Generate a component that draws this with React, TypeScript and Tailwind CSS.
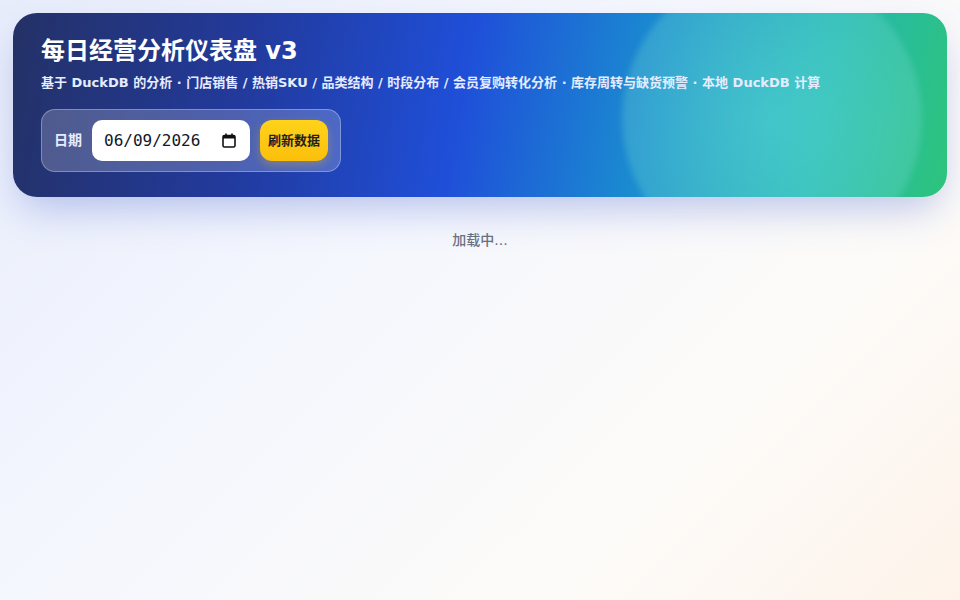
import React from "react";

export default function App() {
  return (
    <div
      className="min-h-[600px] w-full bg-[linear-gradient(135deg,#e8edfb_0%,#f5f7fe_40%,#fdfbf8_75%,#fdf3ea_100%)] px-[13px] pt-[13px]"
      style={{ fontFamily: '"DejaVu Sans", "Noto Sans CJK SC", sans-serif' }}
    >
      <header className="relative overflow-hidden rounded-[24px] bg-[linear-gradient(100deg,#243166_0%,#223a9c_25%,#1f4fd9_48%,#1a8ed0_68%,#23b6b4_85%,#2ec47c_100%)] px-[28px] pt-[24px] pb-[25px] text-white shadow-[0_18px_40px_-8px_rgba(60,90,200,0.35)]">
        <div className="pointer-events-none absolute left-[609px] top-[-45px] h-[300px] w-[300px] rounded-full bg-[radial-gradient(circle_at_50%_50%,rgba(110,230,220,0.45),rgba(120,220,210,0.28)_70%,rgba(255,255,255,0.12)_100%)] blur-[3px]" />
        <div className="relative">
          <h1 className="text-[24px] font-bold leading-[28px]">每日经营分析仪表盘 v3</h1>
          <p className="mt-[10px] text-[13px] font-bold leading-[16px] text-[#e6ecff]">
            基于 DuckDB 的分析 · 门店销售 / 热销SKU / 品类结构 / 时段分布 / 会员复购转化分析 · 库存周转与缺货预警 · 本地 DuckDB 计算
          </p>
          <div className="mt-[18px] inline-flex items-center gap-[10px] rounded-[14px] border border-white/30 bg-white/20 py-[10px] pl-[12px] pr-[12px]">
            <span className="text-[14px] font-bold text-[#e6ecff]">日期</span>
            <div className="flex h-[41px] w-[158px] items-center justify-between rounded-[10px] bg-white pl-[12px] pr-[14px] text-[#111827]">
              <span
                className="text-[16px] font-medium"
                style={{ fontFamily: '"DejaVu Sans Mono", monospace' }}
              >
                06/09/2026
              </span>
              <svg width="14" height="15" viewBox="0 0 14 15" fill="none">
                <rect x="1" y="2.5" width="12" height="11.5" rx="1.5" stroke="#111" strokeWidth="1.6" />
                <rect x="1" y="2.5" width="12" height="3" fill="#111" />
                <line x1="4" y1="0.5" x2="4" y2="3" stroke="#111" strokeWidth="1.6" />
                <line x1="10" y1="0.5" x2="10" y2="3" stroke="#111" strokeWidth="1.6" />
              </svg>
            </div>
            <button className="h-[41px] w-[68px] rounded-[12px] bg-[linear-gradient(180deg,#ffd21a,#fbbf0c)] text-[13px] font-bold text-[#1f1f1f] shadow-[0_4px_10px_rgba(250,190,20,0.3)]">
              刷新数据
            </button>
          </div>
        </div>
      </header>
      <div className="mt-[33px] text-center text-[14px] font-medium text-[#6b7280]">加载中...</div>
    </div>
  );
}
